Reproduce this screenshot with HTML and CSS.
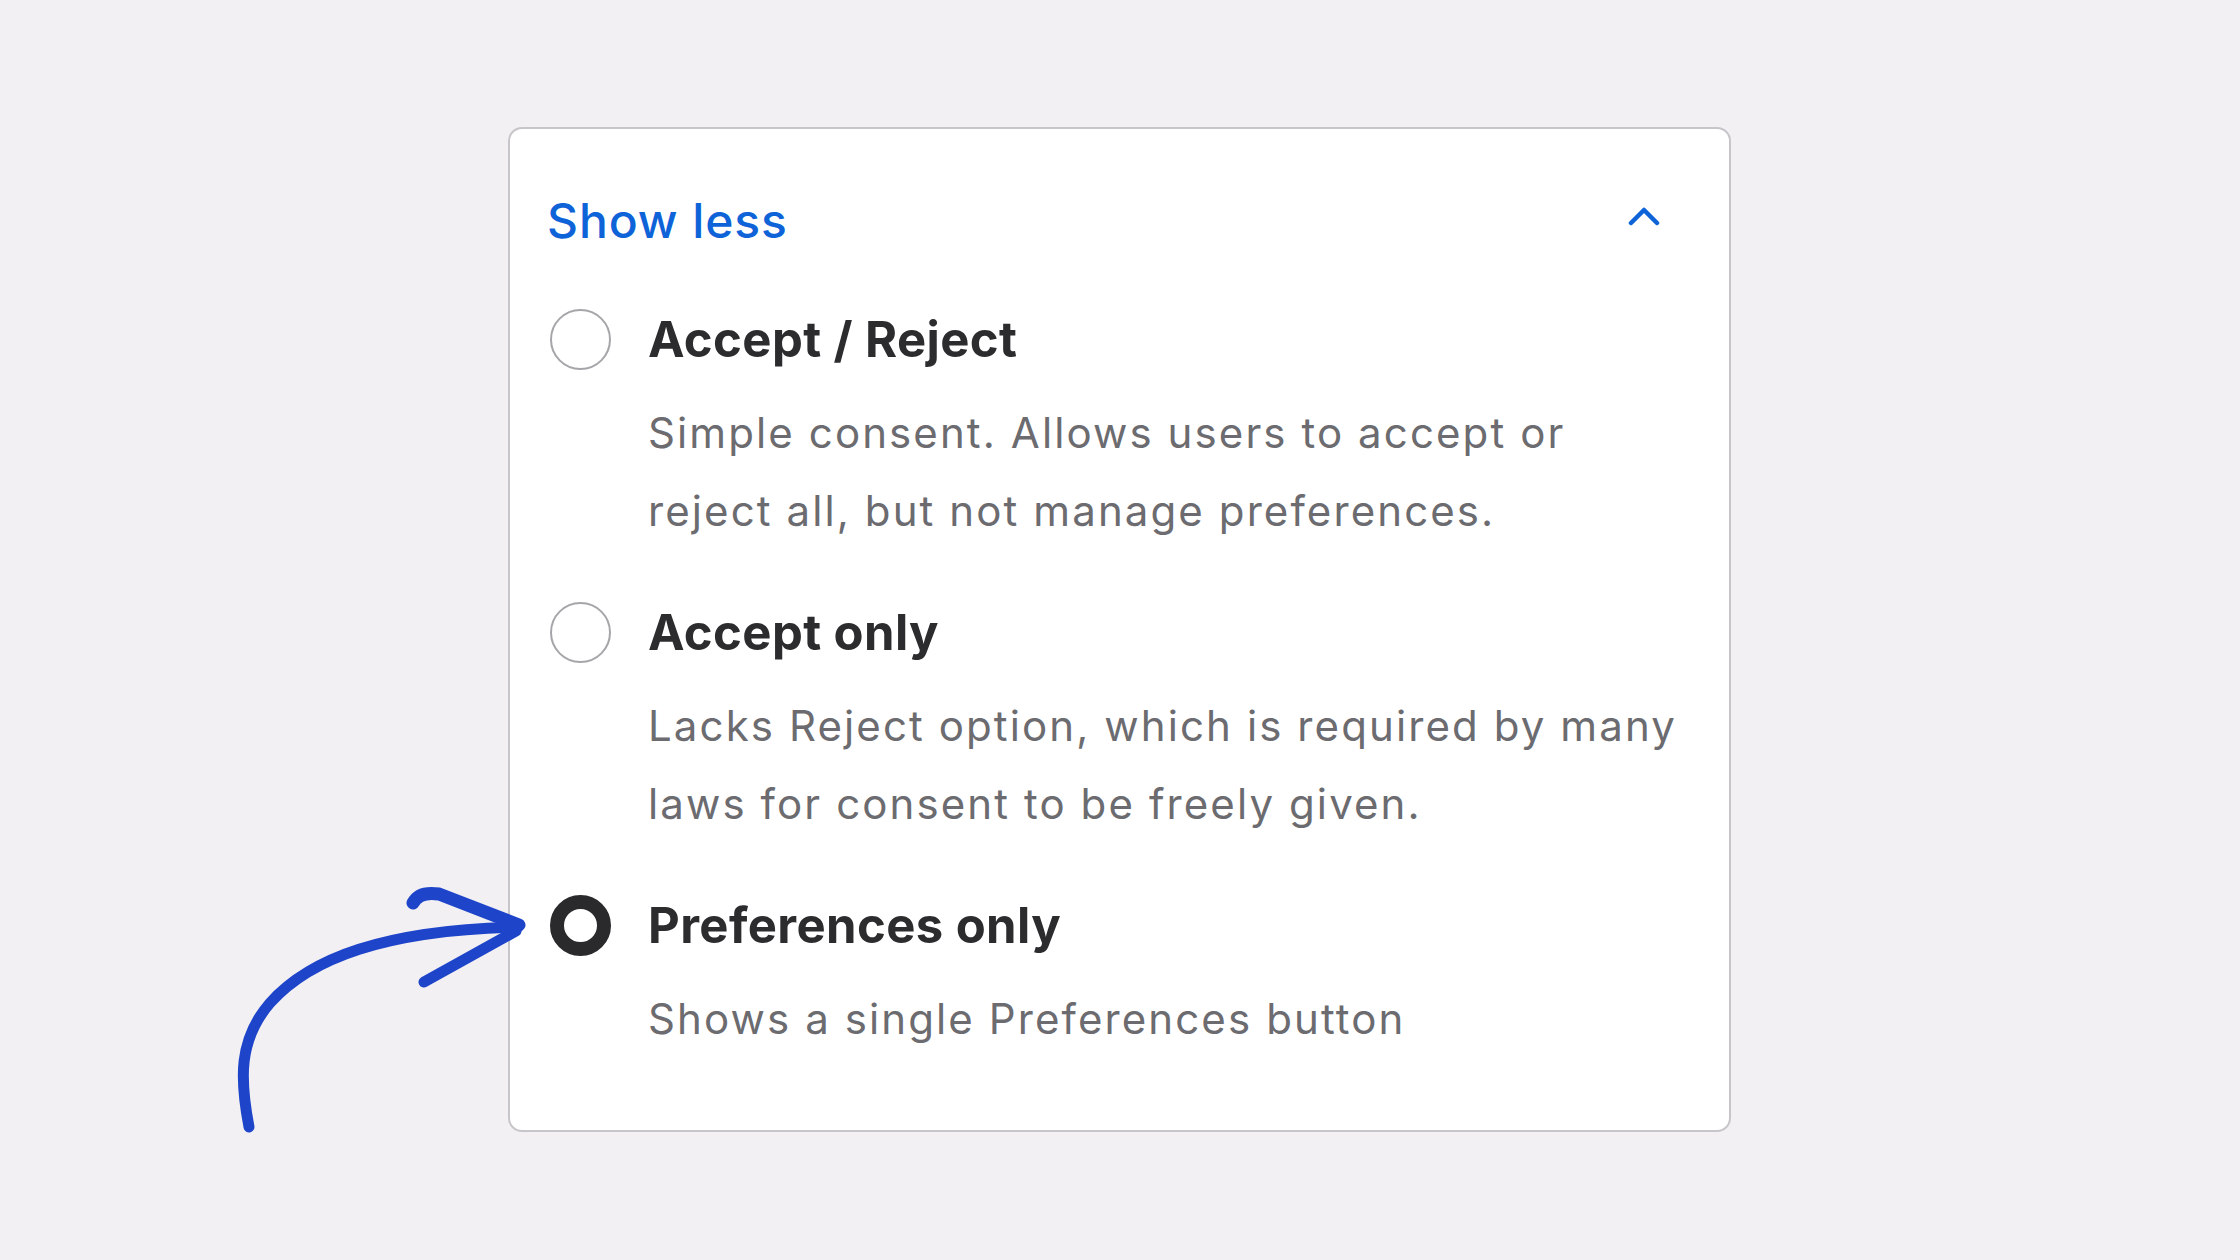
FILE: index.html
```html
<!DOCTYPE html>
<html lang="en">
<head>
    <meta charset="UTF-8">
    <meta name="viewport" content="width=device-width, initial-scale=1.0">
    <title>Consent options</title>
    <link rel="stylesheet" href="styles.css">
</head>
<body>
  <main class="stage">
    <section class="panel">
      <button type="button" class="toggle">
        <span>Show less</span>
        <svg class="chevron" width="32" height="20" viewBox="0 0 32 20" aria-hidden="true">
          <path d="M3 17 L16 4 L29 17" fill="none" stroke="#0f63d8" stroke-width="4.5" stroke-linecap="round" stroke-linejoin="round"/>
        </svg>
      </button>

      <div class="options">
        <label class="option">
          <span class="radio"></span>
          <span class="option-body">
            <span class="option-title">Accept / Reject</span>
            <span class="option-desc">Simple consent. Allows users to accept or reject all, but not manage preferences.</span>
          </span>
        </label>
        <label class="option">
          <span class="radio"></span>
          <span class="option-body">
            <span class="option-title">Accept only</span>
            <span class="option-desc">Lacks Reject option, which is required by many laws for consent to be freely given.</span>
          </span>
        </label>
        <label class="option">
          <span class="radio checked"></span>
          <span class="option-body">
            <span class="option-title">Preferences only</span>
            <span class="option-desc">Shows a single Preferences button</span>
          </span>
        </label>
      </div>
    </section>

    <!-- hand drawn pointer -->
    <svg class="arrow" width="330" height="270" viewBox="220 880 330 270" aria-hidden="true">
      <g fill="none" stroke="#1e45c9" stroke-linecap="round" stroke-linejoin="round">
        <path d="M249 1127 C240 1080 238 1040 270 1003 C310 958 385 930 518 927" stroke-width="11"/>
        <path d="M413 903 Q419 891 439 894 L519 925" stroke-width="13"/>
        <path d="M424 982 L516 931" stroke-width="11"/>
      </g>
    </svg>
  </main>
</body>
</html>
```

FILE: styles.css
```css
body {
    margin: 0;
    padding: 0;
    background-color: #f2f0f3;
    font-family: Inter, "Noto Sans", sans-serif;
}
.stage {
    position: relative;
    min-height: 1260px;
    padding-top: 127px;
    box-sizing: border-box;
}
.panel {
    width: 1223px;
    margin-left: 508px;
    box-sizing: border-box;
    background-color: #fff;
    border: 2px solid #c7c5ca;
    border-radius: 14px;
    padding: 61px 40px 72px 40px;
}
.toggle {
    display: flex;
    align-items: center;
    justify-content: space-between;
    width: 100%;
    height: 60px;
    margin-left: -3px;
    padding: 0;
    border: none;
    background: none;
    font-family: inherit;
    font-size: 48px;
    font-weight: 500;
    letter-spacing: 0.9px;
    color: #0f63d8;
    cursor: pointer;
}
.chevron {
    margin-right: 26px;
    margin-bottom: 8px;
}
.options {
    display: flex;
    flex-direction: column;
    gap: 52px;
    margin-top: 59px;
}
.option {
    display: grid;
    grid-template-columns: 61px 1fr;
    column-gap: 37px;
    align-items: start;
    cursor: pointer;
}
.radio {
    width: 61px;
    height: 61px;
    box-sizing: border-box;
    border: 2px solid #a6a5aa;
    border-radius: 50%;
    background-color: #fff;
}
.radio.checked {
    border: 14px solid #2a2a2d;
}
.option-body {
    display: flex;
    flex-direction: column;
    gap: 24px;
}
.option-title {
    font-size: 49px;
    line-height: 61px;
    font-weight: 700;
    letter-spacing: 0.4px;
    color: #2c2c2f;
}
.option-desc {
    font-size: 42px;
    line-height: 78px;
    color: #6b6b70;
    letter-spacing: 2.1px;
}
.arrow {
    position: absolute;
    left: 220px;
    top: 880px;
    pointer-events: none;
}
```
